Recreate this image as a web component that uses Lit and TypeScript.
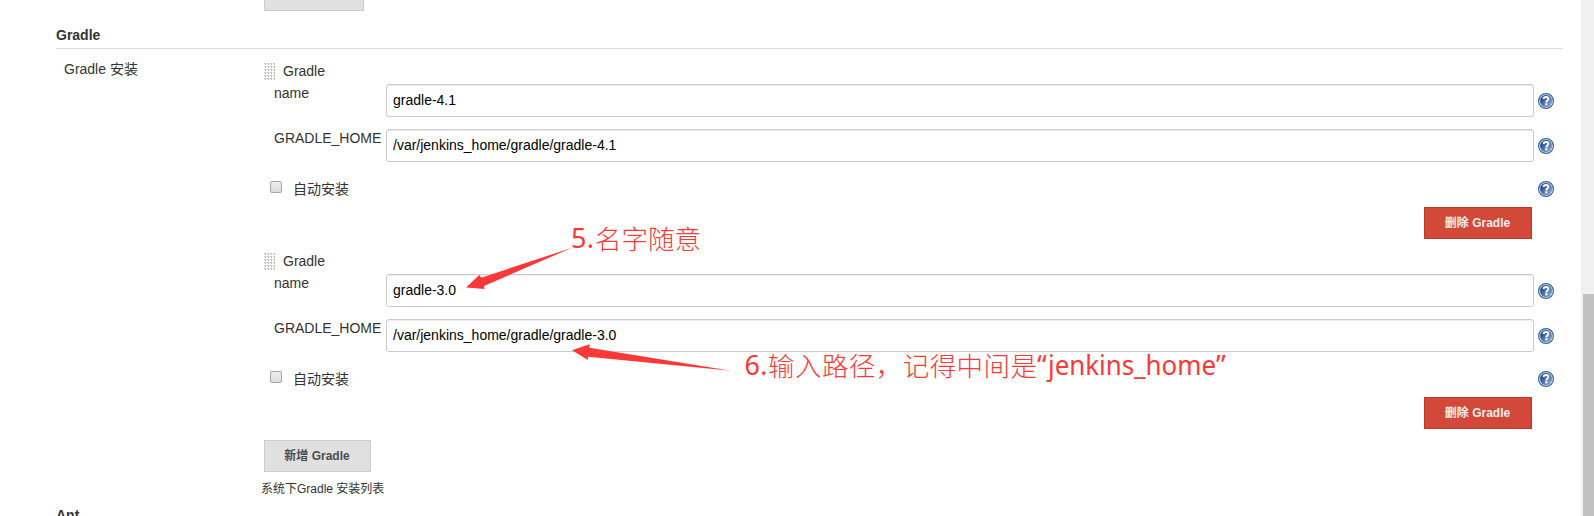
import { LitElement, html, css, svg } from "lit";
import { customElement, property } from "lit/decorators.js";

@customElement("help-icon")
class HelpIcon extends LitElement {
  static styles = css`
    :host { display: block; width: 16px; height: 16px; }
    svg { display: block; }
  `;
  render() {
    return html`<svg width="16" height="16" viewBox="0 0 16 16">
      <defs>
        <linearGradient id="disc" x1="0" y1="0" x2="1" y2="1">
          <stop offset="0.25" stop-color="#26508d"></stop>
          <stop offset="1" stop-color="#9dbbe0"></stop>
        </linearGradient>
      </defs>
      <circle cx="8" cy="8" r="7.4" fill="#fff" stroke="#3465a4" stroke-width="1.2"></circle>
      <circle cx="8" cy="8" r="5.9" fill="url(#disc)" stroke="#2d5893" stroke-width="0.4"></circle>
      <path d="M5.500 6C5.700 4.500 6.600 4 8.100 4c1.400 0 2.200.7 2.200 1.800 0 1.700-2 1.700-2 3.600" fill="none" stroke="#fff" stroke-width="1.9"></path>
      <rect x="7.2" y="10.3" width="2.200" height="2" fill="#fff"></rect>
    </svg>`;
  }
}

@customElement("gradle-installation")
class GradleInstallation extends LitElement {
  @property() name = "";
  @property() home = "";
  static styles = css`
    :host { display: block; height: 190px; }
    .title { display: flex; align-items: flex-start; height: 17px; }
    .title-text { line-height: 16px; }
    .handle { width: 12px; height: 17px; margin-right: 7px; flex: none; }
    .handle svg { display: block; }
    .row { display: grid; grid-template-columns: 112px 1148px 20px; height: 45px; margin-left: 10px; }
    .label { line-height: 16px; margin-top: 5px; white-space: nowrap; }
    .field {
      box-sizing: border-box; width: 1148px; height: 33px; margin: 4px 0 0; padding: 0 6px 2px;
      border: 1px solid #ccc; border-radius: 3px; background: #fff;
      box-shadow: inset 0 1px 1px rgba(0, 0, 0, 0.075);
      font: 14px/29px "Liberation Sans", Arial, sans-serif; color: #000; outline: none;
    }
    .row help-icon { margin: 13px 0 0 4px; }
    .auto { display: flex; align-items: center; height: 20px; padding: 9px 0 0 6px; }
    .box {
      appearance: none; box-sizing: border-box; width: 12px; height: 12px; margin: -4px 11px 0 0;
      border: 1px solid #a5a5a5; border-radius: 2px; background: linear-gradient(#eee, #dcdcdc);
    }
    .auto-label { flex: 1; }
    .auto help-icon { margin-right: 8px; }
    .actions { display: flex; justify-content: flex-end; margin: 8px 30px 0 0; }
    .delete {
      box-sizing: border-box; width: 108px; height: 32px; padding: 0 1px 0 0; border: 1px solid #b93a2b;
      background: #d24939; color: #f4eeee;
      font: bold 12px/30px "Liberation Sans", "Noto Sans CJK SC", sans-serif;
    }
  `;
  render() {
    const dots = [];
    for (let y = 0; y < 6; y++)
      for (let x = 0; x < 4; x++)
        dots.push(svg`<rect x=${x * 3} y=${y * 3} width="2" height="1" fill="#c4c4c4"></rect><rect x=${x * 3 + 1} y=${y * 3 + 1} width="1" height="1" fill="#b4b4b4"></rect>`);
    return html`
      <div class="title">
        <div class="handle"><svg width="12" height="17">${dots}</svg></div>
        <span class="title-text">Gradle</span>
      </div>
      <div class="row">
        <div class="label">name</div>
        <input class="field" .value=${this.name} />
        <help-icon></help-icon>
      </div>
      <div class="row">
        <div class="label">GRADLE_HOME</div>
        <input class="field" .value=${this.home} />
        <help-icon></help-icon>
      </div>
      <div class="auto">
        <input class="box" type="checkbox" />
        <span class="auto-label">自动安装</span>
        <help-icon></help-icon>
      </div>
      <div class="actions"><button class="delete">删除 Gradle</button></div>
    `;
  }
}

@customElement("app-root")
class AppRoot extends LitElement {
  static styles = css`
    :host {
      display: flex; position: relative; width: 1594px; height: 516px; overflow: hidden; background: #fff;
      font: 14px/16px "Liberation Sans", "Noto Sans CJK SC", sans-serif; color: #333;
    }
    .page { width: 1506px; padding-left: 56px; flex: none; }
    .grey {
      display: block; box-sizing: border-box; height: 32px; padding: 0 1px 0 0; border: 1px solid #ccc;
      background: #e0e0e0; color: #4d4d4d;
      font: bold 12px/30px "Liberation Sans", "Noto Sans CJK SC", sans-serif;
    }
    .previous { width: 100px; margin: -21px 0 0 208px; }
    .heading { height: 21px; margin: 16px -1px 0 0; line-height: 16px; font-weight: bold; border-bottom: 1px solid #ddd; }
    .section { display: grid; grid-template-columns: 208px 1fr; height: 453px; }
    .side { padding: 12px 0 0 8px; }
    .installs { padding-top: 14px; }
    .add { width: 107px; margin-top: -3px; }
    .hint { margin: 8px 0 0 -3px; font-size: 12px; line-height: 18px; }
    .next { font-weight: bold; line-height: 16px; margin-top: 5px; }
    .scrollbar { width: 13px; margin-left: auto; background: #f0f0f0; }
    .thumb { height: 222px; margin: 294px 0 0 2px; background: #c1c1c1; }
    .notes { position: absolute; inset: 0; pointer-events: none; }
    .han { font-family: "Noto Sans CJK SC", sans-serif; font-weight: 300; font-size: 26.5px; }
    .latin { font-family: "Noto Sans", sans-serif; font-size: 27px; }
  `;
  render() {
    return html`
      <main class="page">
        <button class="grey previous"></button>
        <div class="heading">Gradle</div>
        <div class="section">
          <div class="side">Gradle 安装</div>
          <div class="installs">
            <gradle-installation name="gradle-4.1" home="/var/jenkins_home/gradle/gradle-4.1"></gradle-installation>
            <gradle-installation name="gradle-3.0" home="/var/jenkins_home/gradle/gradle-3.0"></gradle-installation>
            <button class="grey add">新增 Gradle</button>
            <div class="hint">系统下Gradle 安装列表</div>
          </div>
        </div>
        <div class="next">Ant</div>
      </main>
      <div class="scrollbar"><div class="thumb"></div></div>
      <svg class="notes" width="1594" height="516" fill="#fd3838">
        <path d="M572 247.700 L484 286 L484.500 289 L466 287.500 L479.300 275 L481.300 277.700 Z"></path>
        <path d="M731 370.700 L588 356.700 L587.700 360 L572 350.300 L589.700 344.300 L589.300 347.700 Z"></path>
        <text class="latin" x="571" y="248" textLength="23">5.</text>
        <text class="han" x="595" y="248.500" textLength="106">名字随意</text>
        <text class="latin" x="744.500" y="375" textLength="23">6.</text>
        <text class="han" x="768" y="375.500" textLength="269">输入路径，记得中间是</text>
        <text class="latin" x="1037" y="375">“<tspan x="1048" textLength="168" lengthAdjust="spacingAndGlyphs">jenkins_home</tspan><tspan x="1216">”</tspan></text>
      </svg>
    `;
  }
}
